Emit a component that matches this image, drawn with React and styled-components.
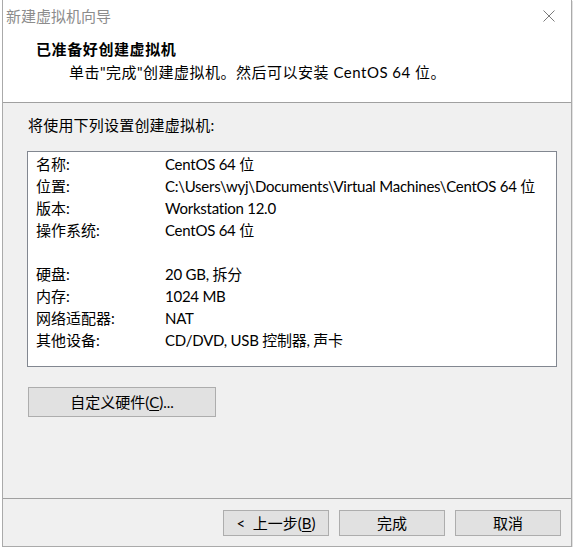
import React from 'react';
import styled, { createGlobalStyle } from 'styled-components';

const GlobalStyle = createGlobalStyle`
  html, body {
    margin: 0;
    padding: 0;
    background: #ffffff;
  }
  body {
    font-family: "Lato", "Noto Sans CJK SC", sans-serif;
    font-size: 15px;
    color: #000;
  }
`;

const Window = styled.div`
  margin-left: 2px;
  width: 570px;
  height: 547px;
  box-sizing: border-box;
  border: 1px solid #aaaaaa;
  border-top: none;
  box-shadow: 1px 1px 0 #e2e2e2;
  display: flex;
  flex-direction: column;
  background: #f0f0f0;
`;

const TitleBar = styled.div`
  height: 32px;
  flex: 0 0 32px;
  background: #fff;
  display: flex;
  align-items: center;
  justify-content: space-between;
  padding: 0 16px 0 3px;
  color: #8c8c8c;
  line-height: 20px;
`;

const Close = styled.svg`
  width: 12px;
  height: 12px;
  display: block;
`;

const Header = styled.div`
  flex: 0 0 71px;
  background: #fff;
  border-bottom: 1px solid #a0a0a0;
  padding: 7px 0 0 32px;
  box-sizing: border-box;
`;

const HeaderTitle = styled.div`
  font-weight: bold;
  line-height: 20px;
  padding-left: 1px;
  letter-spacing: 0.6px;
`;

const HeaderSub = styled.div`
  padding-left: 34px;
  margin-top: 3px;
  line-height: 20px;
  letter-spacing: 0.5px;
`;

const Body = styled.div`
  flex: 1;
  padding: 12px 14px 0 24px;
  display: flex;
  flex-direction: column;
  align-items: flex-start;
`;

const Prompt = styled.div`
  line-height: 20px;
  padding-left: 1px;
  letter-spacing: 0.2px;
`;

const ListBox = styled.div`
  margin-top: 16px;
  align-self: stretch;
  height: 216px;
  box-sizing: border-box;
  border: 1px solid #828790;
  background: #fff;
  padding: 1px 0 0 8px;
`;

const Row = styled.div`
  display: flex;
  height: 22px;
  line-height: 22px;
  white-space: nowrap;
`;

const Label = styled.span`
  flex: 0 0 129px;
`;

const Value = styled.span`
  letter-spacing: -0.25px;
`;

const Button = styled.button`
  font: inherit;
  color: #000;
  box-sizing: border-box;
  background: #e1e1e1;
  border: 1px solid #adadad;
  width: ${({ $w }) => $w}px;
  height: ${({ $h }) => $h}px;
  padding: 0;
  line-height: 20px;
  display: flex;
  align-items: center;
  justify-content: center;
  white-space: pre;
`;

const HardwareButton = styled(Button)`
  margin-top: 20px;
  margin-left: 1px;
`;

const Footer = styled.div`
  flex: 0 0 48px;
  border-top: 1px solid #a0a0a0;
  display: flex;
  justify-content: flex-end;
  gap: 10px;
  padding: 11px 10px 0 0;
  box-sizing: border-box;
`;

const U = styled.span`
  text-decoration: underline;
  text-underline-offset: 2px;
`;

const rows = [
  ['名称:', 'CentOS 64 位'],
  ['位置:', 'C:\\Users\\wyj\\Documents\\Virtual Machines\\CentOS 64 位'],
  ['版本:', 'Workstation 12.0'],
  ['操作系统:', 'CentOS 64 位'],
  ['', ''],
  ['硬盘:', '20 GB, 拆分'],
  ['内存:', '1024 MB'],
  ['网络适配器:', 'NAT'],
  ['其他设备:', 'CD/DVD, USB 控制器, 声卡'],
];

export default function App() {
  return (
    <>
      <GlobalStyle />
      <Window>
        <TitleBar>
          <span>新建虚拟机向导</span>
          <Close viewBox="0 0 12 12">
            <path d="M0.5 0.5 L11.5 11.5 M11.5 0.5 L0.5 11.5" stroke="#7a7a7a" strokeWidth="1" fill="none" />
          </Close>
        </TitleBar>
        <Header>
          <HeaderTitle>已准备好创建虚拟机</HeaderTitle>
          <HeaderSub>单击"完成"创建虚拟机。然后可以安装 CentOS 64 位。</HeaderSub>
        </Header>
        <Body>
          <Prompt>将使用下列设置创建虚拟机:</Prompt>
          <ListBox>
            {rows.map(([k, v], i) => (
              <Row key={i}>
                <Label>{k}</Label>
                <Value>{v}</Value>
              </Row>
            ))}
          </ListBox>
          <HardwareButton $w={188} $h={30}>
            自定义硬件(<U>C</U>)...
          </HardwareButton>
        </Body>
        <Footer>
          <Button $w={106} $h={26}>
            {'<  上一步('}<U>B</U>)
          </Button>
          <Button $w={106} $h={26}>完成</Button>
          <Button $w={106} $h={26}>取消</Button>
        </Footer>
      </Window>
    </>
  );
}
